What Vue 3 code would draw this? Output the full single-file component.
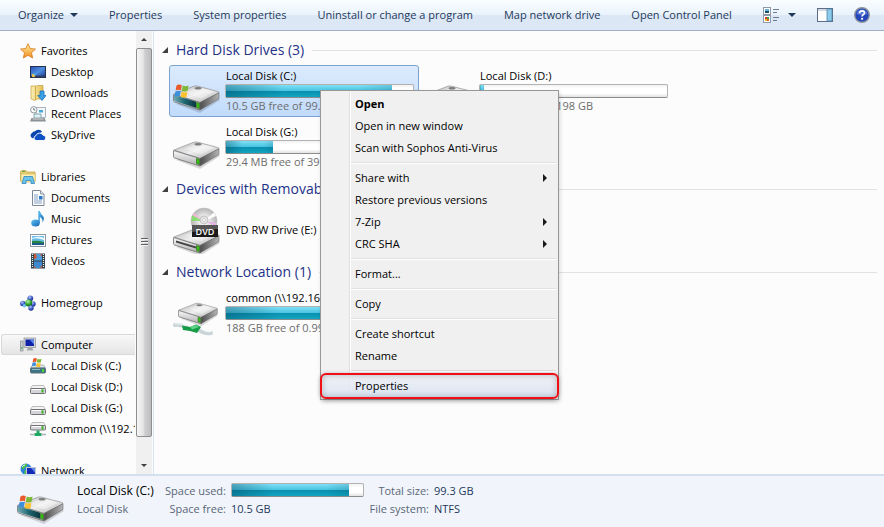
<!-- App.vue -->
<script setup>
import { ref } from "vue";

const commands = [
  "Properties",
  "System properties",
  "Uninstall or change a program",
  "Map network drive",
  "Open Control Panel",
];

const tree = [
  {
    name: "Favorites",
    icon: "star",
    children: [
      { name: "Desktop", icon: "desktop" },
      { name: "Downloads", icon: "downloads" },
      { name: "Recent Places", icon: "recent" },
      { name: "SkyDrive", icon: "cloud" },
    ],
  },
  {
    name: "Libraries",
    icon: "libraries",
    children: [
      { name: "Documents", icon: "document" },
      { name: "Music", icon: "music" },
      { name: "Pictures", icon: "picture" },
      { name: "Videos", icon: "video" },
    ],
  },
  { name: "Homegroup", icon: "homegroup", children: [] },
  {
    name: "Computer",
    icon: "computer",
    children: [
      { name: "Local Disk (C:)", icon: "sys-disk" },
      { name: "Local Disk (D:)", icon: "disk" },
      { name: "Local Disk (G:)", icon: "disk" },
      { name: "common (\\\\192.168.1.10)", icon: "net-disk" },
    ],
  },
  { name: "Network", icon: "network", children: [] },
];

const groups = [
  {
    title: "Hard Disk Drives (3)",
    drives: [
      { name: "Local Disk (C:)", icon: "drive-sys", used: 89, space: "10.5 GB free of 99.3 GB" },
      { name: "Local Disk (D:)", icon: "drive", used: 2, space: "197 GB free of 198 GB" },
      { name: "Local Disk (G:)", icon: "drive", used: 25, space: "29.4 MB free of 39.9 MB" },
    ],
  },
  {
    title: "Devices with Removable Storage (1)",
    drives: [{ name: "DVD RW Drive (E:)", icon: "drive-dvd" }],
  },
  {
    title: "Network Location (1)",
    drives: [
      { name: "common (\\\\192.168.1.10)", icon: "drive-net", used: 81, space: "188 GB free of 0.99 TB" },
    ],
  },
];

// each inner list is a block between separators
const menu = [
  [{ label: "Open", bold: true }, { label: "Open in new window" }, { label: "Scan with Sophos Anti-Virus" }],
  [
    { label: "Share with", sub: true },
    { label: "Restore previous versions" },
    { label: "7-Zip", sub: true },
    { label: "CRC SHA", sub: true },
  ],
  [{ label: "Format..." }],
  [{ label: "Copy" }],
  [{ label: "Create shortcut" }, { label: "Rename" }],
  [{ label: "Properties", marked: true }],
];

const currentNode = ref("Computer");
const currentDrive = ref("Local Disk (C:)");
</script>

<template>
  <div class="explorer">
    <!-- icon sprite -->
    <svg class="sprite" aria-hidden="true">
      <defs>
        <linearGradient id="g-top" x1="0" y1="0" x2="1" y2="1">
          <stop offset="0" stop-color="#b8b8b8" />
          <stop offset="0.5" stop-color="#eeeeee" />
          <stop offset="1" stop-color="#b0b0b0" />
        </linearGradient>
        <linearGradient id="g-front" x1="0" y1="0" x2="0" y2="1">
          <stop offset="0" stop-color="#fafafa" />
          <stop offset="1" stop-color="#aeaeb2" />
        </linearGradient>
        <linearGradient id="g-side" x1="0" y1="0" x2="1" y2="0">
          <stop offset="0" stop-color="#4c4c4c" />
          <stop offset="1" stop-color="#b4b4b4" />
        </linearGradient>
        <linearGradient id="g-teal" x1="0" y1="0" x2="1" y2="0">
          <stop offset="0" stop-color="#6fa9b3" />
          <stop offset="0.5" stop-color="#1d6570" />
          <stop offset="1" stop-color="#0b3740" />
        </linearGradient>
        <linearGradient id="g-star" x1="0" y1="0" x2="0" y2="1">
          <stop offset="0" stop-color="#fff2a0" />
          <stop offset="1" stop-color="#f28a1e" />
        </linearGradient>
        <linearGradient id="g-folder" x1="0" y1="0" x2="1" y2="0">
          <stop offset="0" stop-color="#fbf0b4" />
          <stop offset="1" stop-color="#e3bf57" />
        </linearGradient>
        <linearGradient id="g-blue" x1="0" y1="0" x2="1" y2="1">
          <stop offset="0" stop-color="#5cc3f2" />
          <stop offset="1" stop-color="#1763b4" />
        </linearGradient>
        <linearGradient id="g-screen" x1="0" y1="0" x2="1" y2="1">
          <stop offset="0" stop-color="#2a4fb4" />
          <stop offset="0.5" stop-color="#4f8fe0" />
          <stop offset="1" stop-color="#16358e" />
        </linearGradient>
        <radialGradient id="g-ball" cx="0.4" cy="0.3" r="0.7">
          <stop offset="0" stop-color="#b8c8ff" />
          <stop offset="0.6" stop-color="#3a56c4" />
          <stop offset="1" stop-color="#1c2f86" />
        </radialGradient>
        <radialGradient id="g-green" cx="0.4" cy="0.3" r="0.7">
          <stop offset="0" stop-color="#b9f5a4" />
          <stop offset="0.6" stop-color="#2da32d" />
          <stop offset="1" stop-color="#126112" />
        </radialGradient>
        <radialGradient id="g-disc" cx="0.5" cy="0.5" r="0.5">
          <stop offset="0.3" stop-color="#f2f2f2" />
          <stop offset="1" stop-color="#b4b4b4" />
        </radialGradient>
      </defs>

      <symbol id="flag" viewBox="0 0 16 16">
        <path d="M2.5 2.4Q5 .8 7.8 2.2L6.9 7.4Q4.200 6 1.600 7.600Z" fill="#e8592b" />
        <path d="M8.700 2.500Q11.400 4 14.600 2.500L13.600 7.800Q10.600 9 7.800 7.700Z" fill="#7cb833" />
        <path d="M1.400 8.500Q4 7 6.700 8.300L5.800 13.500Q3.200 12.200.500 13.700Z" fill="#3f8fdc" />
        <path d="M7.600 8.700Q10.300 10 13.400 8.800L12.500 14Q9.600 15.300 6.700 13.900Z" fill="#f9c22e" />
      </symbol>

      <symbol id="drive" viewBox="0 0 48 48">
        <path d="M3 37 27 46 47 33 40 28Z" fill="#000" opacity="0.15" />
        <path d="M1 27 20 19.500Q22 18.600 24 19L45 24.500Q46.500 25 45.500 26L27 35.500Z" fill="url(#g-top)" stroke="#858585" stroke-width="0.600" />
        <path d="M12 25.500 25 20.500 41 24.800 28 31.500Z" fill="#fff" opacity="0.350" />
        <ellipse cx="25" cy="21.300" rx="3.500" ry="1.200" fill="#7e7e7e" />
        <path d="M0.500 27.500 27 35.500V43L1.500 35Q.500 34.500.500 33.500Z" fill="url(#g-front)" stroke="#6f6f6f" stroke-width="0.800" />
        <path d="M27 35.500 46 25.700V31.500L27 43Z" fill="url(#g-side)" stroke="#6a6a6a" stroke-width="0.600" />
        <path d="M23.500 35.500 26.300 36.300V41.500L23.500 40.600Z" fill="#3bc318" stroke="#1c5c0b" stroke-width="0.600" />
      </symbol>

      <symbol id="drive-sys" viewBox="0 0 48 48">
        <use href="#drive" width="48" height="48" />
        <path d="M1 28 23 34.800V40.800L2 34.300Q1 34 1 33Z" fill="url(#g-teal)" />
        <use href="#flag" x="1" y="16" width="16" height="16" />
      </symbol>

      <symbol id="drive-dvd" viewBox="0 0 48 48">
        <use href="#drive" y="4" width="48" height="48" />
        <path d="M3 34.500 23 40.500V42.500L3 36.500Z" fill="#444" />
        <circle cx="31" cy="15" r="13" fill="url(#g-disc)" stroke="#bdbdbd" stroke-width="0.600" />
        <path d="M31 15 19 9.500 18.300 15Z" fill="#7be05c" opacity="0.800" />
        <path d="M31 15 21 7 19.500 9Z" fill="#f3b7d8" />
        <path d="M31 15 41 6.500 43 10Z" fill="#fff" />
        <path d="M31 15 43.500 17 42.500 20Z" fill="#e6b3e8" />
        <circle cx="31" cy="14" r="4" fill="#e6e6e6" stroke="#aaa" stroke-width="0.600" />
        <circle cx="31" cy="14" r="1.500" fill="#fff" stroke="#aaa" stroke-width="0.500" />
        <rect x="19" y="19" width="26" height="12" fill="#1a1a1a" />
        <path d="M19 19H45V23L19 26Z" fill="#555" />
        <text x="32" y="28.500" text-anchor="middle" font-family="Open Sans, sans-serif" font-size="9" font-weight="600" fill="#fff">DVD</text>
      </symbol>

      <symbol id="drive-net" viewBox="0 0 48 48">
        <use href="#drive" x="5" y="-2" width="41" height="41" />
        <path d="M2 36Q8 35 14 39" stroke="#c9d4d8" stroke-width="4" fill="none" stroke-linecap="round" />
        <path d="M26 41Q31 45 38 44" stroke="#c9d4d8" stroke-width="4" fill="none" stroke-linecap="round" />
        <path d="M2 35Q8 34 13 37M27 39Q32 43 38 42.500" stroke="#f4f8f9" stroke-width="1.200" fill="none" />
        <path d="M9 36.500 17 38 23 35.500 28 38 24 44 17 42 10 41Z" fill="#169b46" />
        <path d="M17 38 23 36 26 38 19 40.500Z" fill="#5fd486" />
      </symbol>

      <symbol id="star" viewBox="0 0 16 16">
        <path d="M8 .700 10.200 5.500 15.500 6.100 11.500 9.700 12.600 15 8 12.300 3.400 15 4.500 9.700.500 6.100 5.800 5.500Z" fill="url(#g-star)" stroke="#d9822a" stroke-width="0.900" stroke-linejoin="round" />
      </symbol>
      <symbol id="desktop" viewBox="0 0 16 16">
        <rect x="0.500" y="2.500" width="15" height="11" fill="url(#g-screen)" stroke="#23304f" />
        <path d="M1 11.500H15V13.500H1Z" fill="#2e3f63" />
        <circle cx="3.500" cy="11.500" r="1.800" fill="#f3c63b" />
        <circle cx="4.500" cy="10.500" r="1" fill="#4fb3ef" />
      </symbol>
      <symbol id="downloads" viewBox="0 0 16 16">
        <path d="M1 1H7L8 .500H13V14H7L5 15.500 1 14Z" fill="url(#g-folder)" stroke="#c69f3e" stroke-width="0.700" />
        <path d="M5.500 1.500V15" stroke="#d2ad4d" />
        <path d="M10 6H14V10.500H16L12 15.500 7.800 10.500H10Z" fill="#3aa0e8" stroke="#1c6cb4" stroke-width="0.800" />
      </symbol>
      <symbol id="recent" viewBox="0 0 16 16">
        <rect x="6" y="1.500" width="9.500" height="10" fill="#f3f7fa" stroke="#9aa5ae" stroke-width="0.800" />
        <rect x="9" y="4" width="4" height="2.500" fill="#4aa8dc" />
        <path d="M4 8H11V12H4Z" fill="#dff1f5" stroke="#6f959f" stroke-width="0.800" />
        <path d="M1.500 12H14.500L16 15.500H0Z" fill="#8c9195" />
        <path d="M3 12.500H13L13.500 13.500H2.500Z" fill="#d4d8da" />
        <circle cx="3.800" cy="3.800" r="3.200" fill="#f8fafb" stroke="#8e99a1" />
        <path d="M3.800 2V4H5.300" stroke="#555" stroke-width="0.800" fill="none" />
      </symbol>
      <symbol id="cloud" viewBox="0 0 16 16">
        <path d="M3 11.500A3 3 0 0 1 2 6 3.500 3.500 0 0 1 5 4.200 4.300 4.300 0 0 1 12 4.700L8 7.500Z" fill="#0a44ad" />
        <path d="M6 13.500A2.500 2.500 0 0 1 6 8.600 3.800 3.800 0 0 1 13 8.200 2.700 2.700 0 0 1 13.800 13.500Z" fill="#0f51c4" stroke="#fff" stroke-width="0.900" />
      </symbol>
      <symbol id="libraries" viewBox="0 0 16 16">
        <path d="M.500 2.500 1.500 1.500H6L7 3H15V12H.500Z" fill="#e9cf71" stroke="#c2a044" stroke-width="0.700" />
        <path d="M1 5H15.500L15 13H1Z" fill="#fbeeae" stroke="#d2b258" stroke-width="0.600" />
        <rect x="2" y="2" width="3" height="1" fill="#4fae43" />
        <path d="M4 7.500H12.500L14.500 14.500H11V11.500H6V14.500H2Z" fill="#6cc4ec" stroke="#2f88ba" stroke-width="0.800" />
      </symbol>
      <symbol id="document" viewBox="0 0 16 16">
        <path d="M2.500.500H10.500L14 4V15.500H2.500Z" fill="#fcfdff" stroke="#7e8894" />
        <path d="M10.500.500V4H14" fill="#dfe5ec" stroke="#7e8894" stroke-width="0.800" />
        <path d="M4 5H8M4 7H8M4 9H8M4 11H12M4 13H12" stroke="#7b93bd" stroke-width="0.900" />
        <rect x="9" y="6" width="3.500" height="3.500" fill="#2b78c9" />
      </symbol>
      <symbol id="music" viewBox="0 0 16 16">
        <ellipse cx="5.500" cy="12" rx="4.300" ry="3.500" fill="url(#g-blue)" />
        <path d="M8.300 0H9.800Q10.500 3 13 5 15 7.500 12.500 11.500 13 7.500 9.800 6V12H8.300Z" fill="url(#g-blue)" />
      </symbol>
      <symbol id="picture" viewBox="0 0 16 16">
        <rect x="0.500" y="2.500" width="15" height="12" fill="#fff" stroke="#8f98a0" />
        <rect x="2" y="4" width="12" height="9" fill="#69bce9" />
        <path d="M2 7Q6 5 14 8V6Q9 3.500 2 6Z" fill="#eaf7fd" />
        <path d="M2 9Q7 8 14 10V11H2Z" fill="#27853d" />
        <rect x="2" y="11" width="12" height="2" fill="#1c5b8c" />
      </symbol>
      <symbol id="video" viewBox="0 0 16 16">
        <rect x="1" y="0.500" width="14" height="15" fill="#31414a" />
        <rect x="4" y="1" width="8" height="6.500" fill="#4c9ddf" />
        <rect x="4" y="8.500" width="8" height="6.500" fill="#3f8ace" />
        <path d="M4 1H6L7 4 5.500 6H4ZM12 9V12L10 15H12ZM4 13 6 15H4ZM12 1V4L10 1Z" fill="#c65a3c" />
        <path d="M2.500 1V15M13.500 1V15" stroke="#e9eff2" stroke-width="1.200" stroke-dasharray="1 1" />
      </symbol>
      <symbol id="homegroup" viewBox="0 0 16 16">
        <circle cx="10.300" cy="3.300" r="2.900" fill="url(#g-ball)" />
        <circle cx="2.800" cy="8.500" r="2.700" fill="url(#g-ball)" />
        <circle cx="13" cy="9" r="2.700" fill="url(#g-ball)" />
        <circle cx="4.500" cy="10.800" r="1.800" fill="#6fc3ee" />
        <circle cx="8.700" cy="8" r="3.500" fill="url(#g-green)" />
        <circle cx="11" cy="13" r="2.700" fill="url(#g-ball)" />
      </symbol>
      <symbol id="computer" viewBox="0 0 16 16">
        <rect x="0.500" y="4" width="2.500" height="10" fill="#c9cfd3" stroke="#858b90" stroke-width="0.700" />
        <rect x="1.300" y="10" width="1" height="2" fill="#38b03d" />
        <rect x="4" y="1" width="11.500" height="9.500" fill="#d4d7da" stroke="#8b8f93" stroke-width="0.700" />
        <rect x="5.500" y="2.500" width="8.500" height="6.500" fill="#1022a8" />
        <path d="M9.500 2.500H14V7.500Z" fill="#5f86ea" />
        <path d="M8 10.500H12L13.500 13.500H6.500Z" fill="#a4a8ab" />
      </symbol>
      <symbol id="disk" viewBox="0 0 16 16">
        <path d="M2.500 6.500H13.500L15.500 9.500H.500Z" fill="#f4f4f4" stroke="#a2a2a2" stroke-width="0.700" />
        <rect x="0.500" y="9.500" width="15" height="5" rx="1" fill="#d4d5db" stroke="#727276" />
        <path d="M2 10.500H11" stroke="#fff" />
        <rect x="11.500" y="10.500" width="2" height="3" fill="#37b71c" />
      </symbol>
      <symbol id="sys-disk" viewBox="0 0 16 16">
        <path d="M2.500 7H13.500L15.500 10H.500Z" fill="#dfe7ea" stroke="#8fa1a8" stroke-width="0.700" />
        <rect x="0.500" y="10" width="15" height="5" rx="1" fill="#3b7482" stroke="#5d7078" />
        <path d="M2 11.500H10" stroke="#8dbcc6" />
        <rect x="12" y="11" width="2" height="3" fill="#4cd23a" />
        <use href="#flag" x="1" y="-1" width="12" height="11" />
      </symbol>
      <symbol id="net-disk" viewBox="0 0 16 16">
        <path d="M2.500 1.500H13.500L15.500 4.500H.500Z" fill="#f4f4f4" stroke="#a2a2a2" stroke-width="0.700" />
        <rect x="0.500" y="4.500" width="15" height="4.500" rx="1" fill="#d4d5db" stroke="#727276" />
        <path d="M2 5.500H11" stroke="#fff" />
        <rect x="11.500" y="5.300" width="2" height="3" fill="#37b71c" />
        <path d="M6.500 9.500H9.500V12H11.500V15H4.500V12H6.500Z" fill="#22a865" />
        <path d="M0 13.500H4.500M11.500 13.500H16" stroke="#a9b5b5" stroke-width="1.500" />
      </symbol>
      <symbol id="network" viewBox="0 0 16 16">
        <circle cx="6" cy="6" r="5.500" fill="#2c82d8" />
        <path d="M2 3Q4 .500 7 1 8 3 5 4 4 7 2 6ZM5 7Q8 7 8 11 5 11.500 4 10Z" fill="#4cc24c" />
        <path d="M2 4Q3 2 5 2" stroke="#dff3ff" fill="none" />
        <rect x="6.500" y="4.500" width="9" height="8" fill="#1429b4" stroke="#c3c8cc" />
        <path d="M11 5H15V10Z" fill="#5c84ea" />
        <path d="M9 13H13L14 15H8Z" fill="#9da2a6" />
      </symbol>

      <symbol id="views" viewBox="0 0 16 16">
        <rect x="0.500" y="0.500" width="7" height="7" fill="#fff" stroke="#8f9aa8" />
        <rect x="2" y="2" width="4" height="2" fill="#63b4e4" />
        <rect x="2" y="4" width="4" height="2" fill="#1f4e63" />
        <rect x="0.500" y="8.500" width="7" height="7" fill="#fff" stroke="#8f9aa8" />
        <rect x="2" y="10" width="2" height="2" fill="#d8352b" />
        <rect x="4" y="10" width="2" height="2" fill="#3da23d" />
        <rect x="2" y="12" width="2" height="2" fill="#f0b92d" />
        <rect x="4" y="12" width="2" height="2" fill="#e0602a" />
        <path d="M10 2.500H16M10 5.500H14M10 10.500H16M10 13.500H14" stroke="#6d7c90" />
      </symbol>
      <symbol id="pane" viewBox="0 0 16 16">
        <rect x="0.500" y="1.500" width="15" height="13" fill="#fff" stroke="#5a6c86" />
        <path d="M1 3H15" stroke="#a9b6c6" />
        <rect x="10" y="2" width="5" height="12" fill="#8ccbea" stroke="#4e86a8" stroke-width="0.800" />
      </symbol>
      <symbol id="help" viewBox="0 0 16 16">
        <circle cx="8" cy="8" r="7.300" fill="#2546b8" stroke="#8d949e" stroke-width="1.400" />
        <path d="M2.500 7A5.600 5.600 0 0 1 13.500 7Q8 9 2.500 7Z" fill="#6f90e4" opacity="0.700" />
        <path d="M5.600 6.200Q5.700 3.900 8.100 3.900 10.500 4 10.400 6 10.300 7.200 8.900 8 8.100 8.500 8.100 9.600" fill="none" stroke="#fff" stroke-width="1.700" />
        <circle cx="8.100" cy="11.800" r="1.100" fill="#fff" />
      </symbol>
    </svg>

    <header class="toolbar">
      <button class="cmd">Organize <span class="caret"></span></button>
      <button v-for="c in commands" :key="c" class="cmd">{{ c }}</button>
      <div class="tools">
        <button class="tool" aria-label="Change your view">
          <svg class="ico"><use href="#views" /></svg>
          <span class="caret"></span>
        </button>
        <button class="tool" aria-label="Preview pane"><svg class="ico"><use href="#pane" /></svg></button>
        <button class="tool" aria-label="Help"><svg class="ico"><use href="#help" /></svg></button>
      </div>
    </header>

    <div class="body">
      <aside class="sidebar">
        <nav class="tree">
          <div v-for="node in tree" :key="node.name" class="branch">
            <button class="node" :class="{ current: node.name === currentNode }" @click="currentNode = node.name">
              <svg class="ico"><use :href="'#' + node.icon" /></svg>{{ node.name }}
            </button>
            <button v-for="child in node.children" :key="child.name" class="node child">
              <svg class="ico"><use :href="'#' + child.icon" /></svg>{{ child.name }}
            </button>
          </div>
        </nav>
        <div class="scrollbar">
          <button class="arrow up" aria-label="Scroll up"></button>
          <div class="track">
            <div class="thumb"><span class="grip"></span></div>
          </div>
          <button class="arrow down" aria-label="Scroll down"></button>
        </div>
      </aside>

      <main class="content">
        <section v-for="g in groups" :key="g.title" class="group">
          <h2 class="group-title">
            <span class="fold"></span>{{ g.title }}<span class="rule"></span>
          </h2>
          <div class="tiles">
            <button
              v-for="d in g.drives"
              :key="d.name"
              class="tile"
              :class="{ selected: d.name === currentDrive }"
              @click="currentDrive = d.name"
            >
              <svg class="big"><use :href="'#' + d.icon" /></svg>
              <span class="info">
                <span class="name">{{ d.name }}</span>
                <span v-if="d.space" class="bar"><span class="fill" :style="{ width: d.used + '%' }"></span></span>
                <span v-if="d.space" class="space">{{ d.space }}</span>
              </span>
            </button>
          </div>
        </section>
      </main>
    </div>

    <footer class="details">
      <svg class="big"><use href="#drive-sys" /></svg>
      <div class="facts">
        <span class="title">Local Disk (C:)</span>
        <span class="label">Space used:</span>
        <span class="bar"><span class="fill" :style="{ width: '89%' }"></span></span>
        <span class="label">Total size:</span>
        <span class="value">99.3 GB</span>
        <span class="kind">Local Disk</span>
        <span class="label">Space free:</span>
        <span class="value">10.5 GB</span>
        <span class="label">File system:</span>
        <span class="value">NTFS</span>
      </div>
    </footer>

    <!-- context menu, opened over the C: tile -->
    <div class="menu" role="menu">
      <div v-for="(block, i) in menu" :key="i" class="block">
        <button
          v-for="item in block"
          :key="item.label"
          class="item"
          :class="{ bold: item.bold, marked: item.marked }"
          role="menuitem"
        >
          {{ item.label }}<span v-if="item.sub" class="more"></span>
        </button>
      </div>
    </div>
  </div>
</template>

<style>
body {
  margin: 0;
}
</style>

<style scoped>
.explorer {
  position: relative;
  display: flex;
  flex-direction: column;
  height: 100vh;
  background: #fcfcfc;
  color: #000;
  font-family: "Open Sans", "Noto Sans", sans-serif;
  font-size: 11px;
  line-height: 16px;
  overflow: hidden;
}

button {
  margin: 0;
  padding: 0;
  border: none;
  background: none;
  color: inherit;
  font: inherit;
  text-align: left;
  white-space: nowrap;
}

.sprite {
  position: absolute;
  width: 0;
  height: 0;
}

.ico {
  width: 16px;
  height: 16px;
  flex: none;
}

.big {
  width: 48px;
  height: 48px;
  flex: none;
}

/* toolbar */
.toolbar {
  display: flex;
  align-items: center;
  gap: 31px;
  height: 30px;
  padding: 0 15px 0 18px;
  flex: none;
  border-bottom: 1px solid #a0afc3;
  background: linear-gradient(#fafdff 0%, #eaf3fc 48%, #dce7f5 52%, #dde8f6 100%);
  color: #1e395b;
}

.cmd {
  display: flex;
  align-items: center;
  gap: 6px;
}

.caret {
  border: 4px solid transparent;
  border-top-color: #1e395b;
  border-bottom: none;
}

.tools {
  display: flex;
  align-items: center;
  gap: 21px;
  margin-left: auto;
}

.tool {
  display: flex;
  align-items: center;
  gap: 9px;
}

.body {
  display: flex;
  flex: 1;
  min-height: 0;
}

/* navigation pane */
.sidebar {
  display: flex;
  width: 153px;
  flex: none;
  border-right: 1px solid #d6e5f5;
}

.tree {
  flex: 1;
  min-width: 0;
  padding-top: 9px;
  margin-right: 1px;
  overflow: hidden;
}

.branch {
  margin-bottom: 21px;
}

.node {
  display: flex;
  align-items: center;
  gap: 5px;
  width: 100%;
  height: 21px;
  padding-left: 20px;
  overflow: hidden;
}

.node.child {
  padding-left: 30px;
}

.node.current {
  padding-left: 18px;
  margin-left: 1px;
  border: 1px solid #d9d9d9;
  border-right: none;
  border-radius: 3px 0 0 3px;
  background: linear-gradient(#f8f8f8, #e5e5e5);
}

.scrollbar {
  display: flex;
  flex-direction: column;
  width: 16px;
  margin-right: 1px;
  flex: none;
  background: #f0f0f0;
}

.arrow {
  display: flex;
  align-items: center;
  justify-content: center;
  height: 17px;
}

.arrow::before {
  content: "";
  border: 3px solid transparent;
}

.arrow.up::before {
  border-bottom-color: #404040;
  border-top: none;
}

.arrow.down::before {
  border-top-color: #404040;
  border-bottom: none;
}

.track {
  flex: 1;
}

.thumb {
  display: flex;
  align-items: center;
  justify-content: center;
  box-sizing: border-box;
  height: 95%;
  border: 1px solid #8e8e8e;
  border-radius: 2px;
  background: linear-gradient(90deg, #f6f6f6, #e4e4e6 45%, #cfcfd2 55%, #bdbdc0);
}

.grip {
  width: 7px;
  height: 8px;
  background: repeating-linear-gradient(#5e5e5e 0 1px, #f4f4f4 1px 2px, transparent 2px 3px);
}

/* drives */
.content {
  flex: 1;
  min-width: 0;
  padding: 4px 7px 0 8px;
}

.group {
  margin-bottom: 1px;
}

.group-title {
  display: flex;
  align-items: center;
  gap: 8px;
  height: 30px;
  margin: 0;
  color: #1e3287;
  font-size: 14px;
  font-weight: 400;
  white-space: nowrap;
}

.fold {
  border: 3px solid transparent;
  border-right-color: #404040;
  border-bottom-color: #404040;
}

.rule {
  flex: 1;
  height: 1px;
  background: #e2e2e2;
}

.tiles {
  display: grid;
  grid-template-columns: repeat(auto-fill, 250px);
  gap: 4px;
  padding-left: 7px;
}

.tile {
  display: flex;
  align-items: center;
  gap: 4px;
  box-sizing: border-box;
  height: 52px;
  padding: 0 4px 0 3px;
  border: 1px solid transparent;
  border-radius: 3px;
}

.tile.selected {
  border-color: #7da2ce;
  background: linear-gradient(#dcebfd, #c1dbfc);
}

.info {
  flex: 1;
  min-width: 0;
}

.name,
.space {
  display: block;
  padding-left: 1px;
}

.space {
  color: #6d6d6d;
}

.bar {
  display: block;
  box-sizing: border-box;
  height: 14px;
  border: 1px solid #b2b2b2;
  border-bottom-color: #8c8c8c;
  border-radius: 2px;
  background: linear-gradient(#f2f2f2, #fff 30%, #fff 70%, #e2e2e2);
}

.fill {
  display: block;
  height: 100%;
  background:
    linear-gradient(90deg, rgba(0, 60, 85, 0.35), transparent 35%, transparent 80%, rgba(0, 60, 85, 0.15)),
    linear-gradient(#7fe0f4, #46c3e2 50%, #0a8fae 50%, #12a5c2);
}

/* details pane */
.details {
  display: flex;
  align-items: center;
  gap: 12px;
  height: 51px;
  padding-left: 17px;
  flex: none;
  border-top: 2px solid #d3e0ee;
  background: #f1f5fb;
}

.facts {
  display: grid;
  grid-template-columns: 80px 64px 133px 60px auto;
  column-gap: 5px;
  row-gap: 2px;
  align-items: center;
  padding-bottom: 4px;
  white-space: nowrap;
}

.facts .bar {
  align-self: start;
}

.title {
  font-size: 12px;
}

.label,
.kind {
  color: #5a6779;
}

.label {
  display: flex;
  justify-content: flex-end;
}

.value {
  color: #1e395b;
}

/* context menu */
.menu {
  position: absolute;
  top: 90px;
  left: 320px;
  box-sizing: border-box;
  width: 239px;
  padding: 2px;
  border: 1px solid #979797;
  background: linear-gradient(90deg, #f1f1f1 28px, #e0e0e0 28px 29px, #fff 29px 30px, #f0f0f0 30px);
  box-shadow: 1px 2px 4px rgba(0, 0, 0, 0.15);
}

.block + .block {
  padding-top: 8px;
  background: linear-gradient(transparent 3px, #e0e0e0 3px 4px, #fff 4px 5px, transparent 5px) 28px 0 no-repeat;
}

.item {
  display: flex;
  align-items: center;
  justify-content: space-between;
  width: 100%;
  height: 22px;
  padding: 0 9px 0 32px;
}

.item.bold {
  font-weight: 700;
}

.more {
  border: 4px solid transparent;
  border-left-color: #1a1a1a;
  border-right: none;
}

.item.marked {
  position: relative;
  background: linear-gradient(rgba(240, 242, 246, 0.8), rgba(214, 226, 245, 0.8));
}

/* red frame round the entry */
.item.marked::after {
  content: "";
  position: absolute;
  inset: -2px -3px;
  border: 2px solid #ee1016;
  border-radius: 6px;
  box-shadow: 0 1px 4px rgba(0, 0, 0, 0.3), inset 0 0 6px rgba(0, 0, 0, 0.25);
}
</style>
